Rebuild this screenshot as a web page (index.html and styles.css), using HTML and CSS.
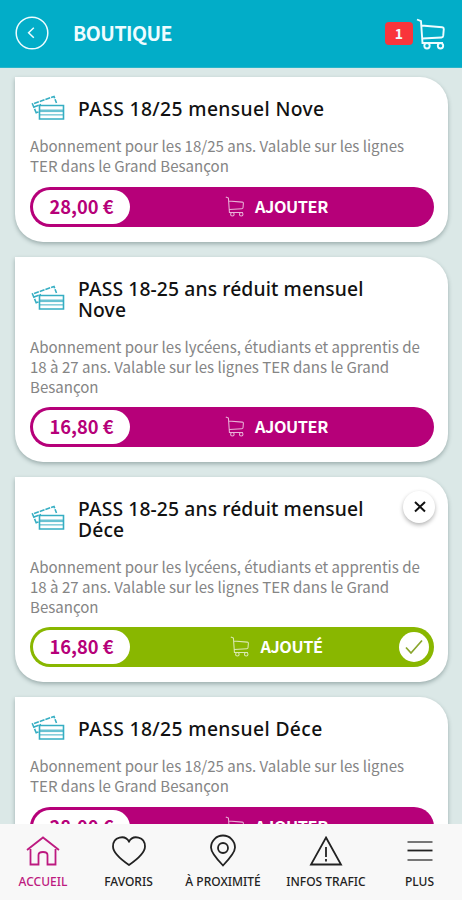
FILE: index.html
```
<!DOCTYPE html>
<html lang="fr">
<head>
<meta charset="utf-8">
<title>Boutique</title>
<link rel="stylesheet" href="styles.css">
</head>
<body>
<svg class="defs" width="0" height="0">
  <symbol id="cart" viewBox="0 0 30 32"><path d="M1 1.500l4 1.700 1.500 21.800h20.500M5.400 7.500l20.800 1.800q1.600.2 1.600 1.600l-.6 7q-.2 1.500-1.700 1.600L6.300 20.500"/><circle cx="11" cy="27.800" r="2.700"/><circle cx="24.500" cy="27.800" r="2.700"/></symbol>
  <symbol id="cards" viewBox="0 0 34 26"><path class="back" d="M5.500 18.500L1.500 9 23 1.500l2.500 6.500M3 12L10 9.500M5.500 17.500l2-.6"/><path d="M8.500 10.500h24v13.500h-24z"/><path class="band" d="M8.500 15.800h24"/><path class="thin" d="M8.500 19.800h24"/></symbol>
</svg>
<div class="app">
  <header class="header">
    <svg class="back-btn" viewBox="0 0 34 34"><circle cx="17" cy="17" r="15.800"/><path d="M18.800 11.800l-5.200 5 5.200 5"/></svg>
    <h1>BOUTIQUE</h1>
    <span class="badge">1</span>
    <svg class="header-cart"><use href="#cart"/></svg>
  </header>
  <main class="list">
    <article class="card">
      <div class="head"><svg class="cards-icon"><use href="#cards"/></svg><h2>PASS 18/25 mensuel Nove</h2></div>
      <p>Abonnement pour les 18/25 ans. Valable sur les lignes<br>TER dans le Grand Besançon</p>
      <div class="buy"><span class="price">28,00 €</span><span class="action"><svg class="cart"><use href="#cart"/></svg>AJOUTER</span></div>
    </article>
    <article class="card">
      <div class="head two"><svg class="cards-icon"><use href="#cards"/></svg><h2 class="wide">PASS 18-25 ans réduit mensuel<br>Nove</h2></div>
      <p>Abonnement pour les lycéens, étudiants et apprentis de<br>18 à 27 ans. Valable sur les lignes TER dans le Grand<br>Besançon</p>
      <div class="buy"><span class="price">16,80 €</span><span class="action"><svg class="cart"><use href="#cart"/></svg>AJOUTER</span></div>
    </article>
    <article class="card">
      <svg class="close" viewBox="0 0 32 32"><path d="M12 11l10 9.500M22 11l-10 9.500"/></svg>
      <div class="head two"><svg class="cards-icon"><use href="#cards"/></svg><h2 class="wide">PASS 18-25 ans réduit mensuel<br>Déce</h2></div>
      <p>Abonnement pour les lycéens, étudiants et apprentis de<br>18 à 27 ans. Valable sur les lignes TER dans le Grand<br>Besançon</p>
      <div class="buy added"><span class="price">16,80 €</span><span class="action"><svg class="cart"><use href="#cart"/></svg>AJOUTÉ</span><svg class="check" viewBox="0 0 30 30"><path d="M7 15.500l5 5.500L23 8.500"/></svg></div>
    </article>
    <article class="card">
      <div class="head"><svg class="cards-icon"><use href="#cards"/></svg><h2>PASS 18/25 mensuel Déce</h2></div>
      <p>Abonnement pour les 18/25 ans. Valable sur les lignes<br>TER dans le Grand Besançon</p>
      <div class="buy"><span class="price">28,00 €</span><span class="action"><svg class="cart"><use href="#cart"/></svg>AJOUTER</span></div>
    </article>
  </main>
  <nav class="nav">
    <a class="active"><svg viewBox="0 0 36 34"><path d="M2 16L18 3.500 34 16M5.500 15v15.500h8V21q0-3 4.500-3t4.500 3v9.500h8V15"/></svg>ACCUEIL</a>
    <a><svg viewBox="0 0 36 34"><path d="M18 31Q2 20 2 12.500C2 2.500 14 .5 18 7.500C22 .5 34 2.500 34 12.500Q34 20 18 31z"/></svg>FAVORIS</a>
    <a><svg viewBox="0 0 36 34"><path d="M18 31.500Q6 19 6 13.500a12 12 0 0 1 24 0Q30 19 18 31.500z"/><circle cx="18" cy="14" r="5"/></svg>À PROXIMITÉ</a>
    <a><svg viewBox="0 0 36 34"><path d="M18 3.500L33 30.500H3zM18 13v10M18 25v2.500"/></svg>INFOS TRAFIC</a>
    <a><svg viewBox="0 0 36 34"><path class="soft" d="M5.500 8h25M5.500 26h25"/><path d="M5.500 16.500h25"/></svg>PLUS</a>
  </nav>
</div>
</body>
</html>
```
FILE: styles.css
```
* { box-sizing: border-box; }
body { margin: 0; background: #dbe8e7; font-family: "Noto Sans CJK JP", "Noto Sans", sans-serif; }
svg { fill: none; stroke: currentColor; flex: none; }
.defs { display: block; }
.back { stroke-dasharray: 5 1; }
.band { stroke-width: 2.6; opacity: .75; }
.thin { opacity: .6; }
.app { height: 900px; display: flex; flex-direction: column; overflow: hidden; }
.header { height: 68px; flex: none; display: flex; align-items: center; padding: 0 15px; background: #02adc8; color: #effcff; border-bottom: 1px solid #28b5ca; }
.back-btn { width: 34px; height: 34px; stroke-width: 1.5; margin-top: -2px; }
h1 { margin: -2px auto 0 24px; font-size: 19.500px; line-height: 24px; letter-spacing: -.5px; font-weight: 700; }
.badge { width: 28px; height: 23px; border-radius: 4px; background: #f9353b; font-size: 14px; line-height: 22px; font-weight: 700; text-align: center; margin-right: 3px; }
.header-cart { width: 30px; height: 32px; stroke-width: 1.9; margin-right: 1px; }
.list { flex: 1; min-height: 0; overflow: hidden; display: flex; flex-direction: column; gap: 15px; padding: 8.500px 14px 0 15px; }
.card { position: relative; flex: none; padding: 21.500px 14px 14.500px 15px; background: #fff; border-radius: 0 28px 28px 28px; box-shadow: 0 2px 4px rgba(60, 85, 85, .4); }
.head { display: flex; align-items: center; gap: 13px; height: 21px; margin-bottom: 17px; }
.head.two { height: 42px; margin-bottom: 16.500px; }
.cards-icon { width: 34px; height: 26px; color: #35aec3; stroke-width: 1.6; margin: -2px 0 0 1px; }
h2 { margin: 0; font: 500 19.300px/21px "Noto Sans", sans-serif; letter-spacing: .37px; color: #111; white-space: nowrap; }
h2.wide { letter-spacing: .12px; }
p { margin: 0 0 11px; font-size: 15.050px; line-height: 20px; color: #858585; white-space: nowrap; }
.two + p { margin-bottom: 10.500px; }
.buy { display: flex; align-items: center; height: 40px; border-radius: 20px; padding: 3px; background: #b60079; color: #fff; position: relative; }
.price { width: 97px; height: 34px; border-radius: 17px; background: #fff; color: #b60079; font-size: 18.300px; line-height: 32px; font-weight: 700; text-align: center; }
.action { flex: 1; display: flex; align-items: center; justify-content: center; gap: 10px; font-size: 16.300px; line-height: 24px; letter-spacing: -.4px; font-weight: 700; padding: 0 8px 2px 0; }
.cart { width: 20px; height: 21px; stroke-width: 1.6; opacity: .7; }
.added { background: #89b700; }
.check { position: absolute; right: 5px; top: 5px; width: 30px; height: 30px; border-radius: 50%; background: #fff; color: #89a52d; stroke-width: 1.7; }
.close { position: absolute; right: 13px; top: 14px; width: 32px; height: 32px; border-radius: 50%; background: #fff; color: #111; stroke-width: 2; box-shadow: 0 2px 4px rgba(0, 0, 0, .3); }
.nav { height: 76px; flex: none; display: grid; grid-template-columns: 86px 85px 104px 102px 85px; background: #f8f8f8; font: 500 12px/14px "Noto Sans", sans-serif; color: #222; z-index: 1; }
.nav a { display: flex; flex-direction: column; align-items: center; padding-top: 10px; gap: 7px; white-space: nowrap; }
.nav svg { width: 36px; height: 34px; stroke-width: 1.8; }
.nav .soft { stroke: #777; stroke-width: 2.200; }
.nav .active { color: #bd1a80; }
```
